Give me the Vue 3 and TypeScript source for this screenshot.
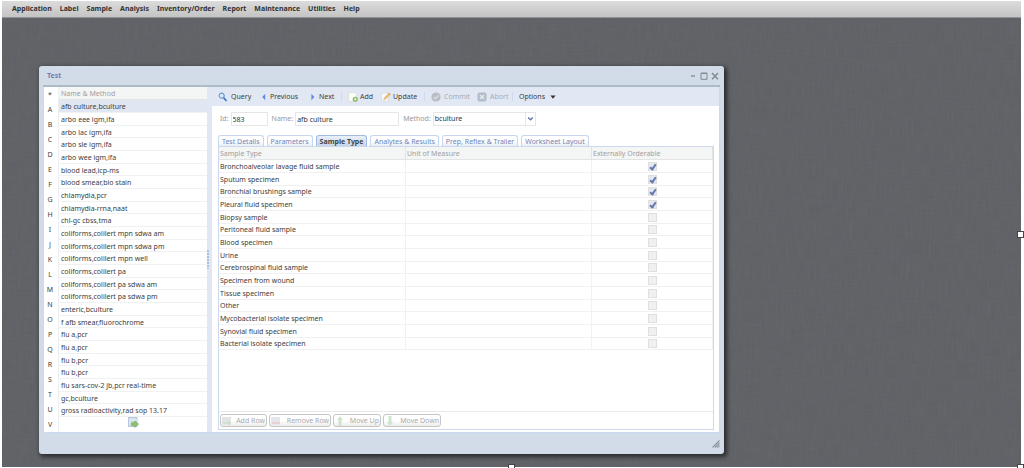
<script setup lang="ts">
import { ref } from 'vue'

interface SampleRow {
  name: string
  orderable: boolean
}

const menus = ['Application', 'Label', 'Sample', 'Analysis', 'Inventory/Order', 'Report', 'Maintenance', 'Utilities', 'Help']

const letters = ['*', ...'ABCDEFGHIJKLMNOPQRSTUV']

const tests = [
  'afb culture,bculture',
  'arbo eee igm,ifa',
  'arbo lac igm,ifa',
  'arbo sle igm,ifa',
  'arbo wee igm,ifa',
  'blood lead,icp-ms',
  'blood smear,bio stain',
  'chlamydia,pcr',
  'chlamydia-rrna,naat',
  'chl-gc cbss,tma',
  'coliforms,colilert mpn sdwa am',
  'coliforms,colilert mpn sdwa pm',
  'coliforms,colilert mpn well',
  'coliforms,colilert pa',
  'coliforms,colilert pa sdwa am',
  'coliforms,colilert pa sdwa pm',
  'enteric,bculture',
  'f afb smear,fluorochrome',
  'flu a,pcr',
  'flu a,pcr',
  'flu b,pcr',
  'flu b,pcr',
  'flu sars-cov-2 jb,pcr real-time',
  'gc,bculture',
  'gross radioactivity,rad sop 13.17',
]

const tabs = ['Test Details', 'Parameters', 'Sample Type', 'Analytes & Results', 'Prep, Reflex & Trailer', 'Worksheet Layout']

const samples = ref<SampleRow[]>([
  { name: 'Bronchoalveolar lavage fluid sample', orderable: true },
  { name: 'Sputum specimen', orderable: true },
  { name: 'Bronchial brushings sample', orderable: true },
  { name: 'Pleural fluid specimen', orderable: true },
  { name: 'Biopsy sample', orderable: false },
  { name: 'Peritoneal fluid sample', orderable: false },
  { name: 'Blood specimen', orderable: false },
  { name: 'Urine', orderable: false },
  { name: 'Cerebrospinal fluid sample', orderable: false },
  { name: 'Specimen from wound', orderable: false },
  { name: 'Tissue specimen', orderable: false },
  { name: 'Other', orderable: false },
  { name: 'Mycobacterial isolate specimen', orderable: false },
  { name: 'Synovial fluid specimen', orderable: false },
  { name: 'Bacterial isolate specimen', orderable: false },
])

const selectedTest = ref(0)
const activeTab = ref(2)
const testId = ref('583')
const testName = ref('afb culture')
const method = ref('bculture')
</script>

<template>
  <div class="screen">
    <div class="desktop">
      <svg class="weave" aria-hidden="true">
        <filter id="weave-h"><feTurbulence type="fractalNoise" baseFrequency="0.05 0.5" numOctaves="2" /><feColorMatrix type="saturate" values="0" /></filter>
        <filter id="weave-v"><feTurbulence type="fractalNoise" baseFrequency="0.5 0.05" numOctaves="2" /><feColorMatrix type="saturate" values="0" /></filter>
        <rect width="100%" height="100%" filter="url(#weave-h)" />
        <rect width="100%" height="100%" filter="url(#weave-v)" />
      </svg>

      <nav class="menubar">
        <button v-for="m in menus" :key="m" type="button">{{ m }}</button>
      </nav>

      <section class="window">
        <header class="titlebar">
          <h1>Test</h1>
          <div class="controls">
            <button type="button" aria-label="Minimize">
              <svg viewBox="0 0 8 8"><path d="M2 4h4" stroke-width="1.3" /></svg>
            </button>
            <button type="button" aria-label="Maximize">
              <svg viewBox="0 0 8 8"><path d="M1 1h6v6.3H1zM1 1.5h6" /></svg>
            </button>
            <button type="button" aria-label="Close">
              <svg viewBox="0 0 8 8"><path d="M1 1l6 6.3M7 1L1 7.3" stroke-width="1.5" /></svg>
            </button>
          </div>
        </header>

        <div class="body">
          <aside class="browser">
            <div class="letters">
              <button v-for="l in letters" :key="l" type="button">{{ l }}</button>
            </div>
            <div class="tests">
              <h2>Name &amp; Method</h2>
              <ul>
                <li v-for="(t, i) in tests" :key="i" :class="{ selected: i === selectedTest }" @click="selectedTest = i">{{ t }}</li>
              </ul>
              <button class="more" type="button" aria-label="Next page">
                <svg viewBox="0 0 11 11">
                  <rect x="0.5" y="0.5" width="8.5" height="9" fill="#d3e0ec" stroke="#b9c9db" />
                  <path d="M1 3h8M1 5.5h8" stroke="#e9f0f7" />
                  <path d="M3.5 5.5h3.2V3.8L10.6 7l-3.9 3.4V8.7H3.5z" fill="#8cc26c" stroke="#6aa650" stroke-width=".5" />
                </svg>
              </button>
            </div>
          </aside>

          <div class="splitter"><span></span></div>

          <main class="detail">
            <div class="toolbar">
              <button class="w-query" type="button">
                <svg class="icon" viewBox="0 0 10 10">
                  <path d="M5.6 5.6L8.5 9" stroke="#4779b9" stroke-width="1.7" />
                  <circle cx="3.7" cy="3.6" r="2.5" fill="#dcebf8" stroke="#6c9bd2" stroke-width="1.2" />
                </svg>Query
              </button>
              <button class="w-previous" type="button">
                <svg class="arrow" viewBox="0 0 6 10"><path d="M4.5 1v8L0.8 5z" fill="#5b8def" /></svg>Previous
              </button>
              <button class="w-next" type="button">
                <svg class="arrow" viewBox="0 0 6 10"><path d="M1 1v8L4.7 5z" fill="#5b8def" /></svg>Next
              </button>
              <i class="sep"></i>
              <button class="w-add tight" type="button">
                <svg class="icon" viewBox="0 0 10 10">
                  <path d="M.7.5h5.8l2 2v6.8H.7z" fill="#fbfcf8" stroke="#d4d8d2" stroke-width=".6" />
                  <circle cx="7.2" cy="7.2" r="2.5" fill="#79b254" />
                  <path d="M7.2 5.7v3M5.7 7.2h3" stroke="#fff" stroke-width=".9" />
                </svg>Add
              </button>
              <button class="w-update tight" type="button">
                <svg class="icon" viewBox="0 0 10 10">
                  <path d="M.6 1h6.8v8.4H.6z" fill="#f7f9fc" stroke="#ccd4df" stroke-width=".6" />
                  <path d="M2.6 8l.6-2L7.7 1.2l1.5 1.3L4.6 7.3z" fill="#f1c06a" stroke="#dba966" stroke-width=".4" />
                  <path d="M7 1.9L7.9 1l1.6 1.3-.9 1z" fill="#df9a64" />
                </svg>Update
              </button>
              <i class="sep"></i>
              <button class="w-commit" type="button" disabled>
                <svg class="icon" viewBox="0 0 10 10">
                  <circle cx="5" cy="5" r="4.6" fill="#b6bdc5" />
                  <path d="M2.7 5.1l1.7 1.8L7.5 3.4" fill="none" stroke="#dfe4ea" stroke-width="1.3" />
                </svg>Commit
              </button>
              <button class="w-abort" type="button" disabled>
                <svg class="icon" viewBox="0 0 10 10">
                  <rect x=".5" y=".5" width="9" height="9" rx="2" fill="#b1bdc9" />
                  <path d="M3 3l4 4M7 3L3 7" stroke="#e4e9ef" stroke-width="1.5" />
                </svg>Abort
              </button>
              <i class="sep"></i>
              <button class="w-options" type="button">
                Options
                <svg class="caret" viewBox="0 0 6 4"><path d="M.4.4h5.2L3 3.7z" fill="#333" /></svg>
              </button>
            </div>

            <form class="fields" @submit.prevent>
              <label for="test-id">Id:</label>
              <input id="test-id" v-model="testId" class="f-id" type="text" />
              <label for="test-name">Name:</label>
              <input id="test-name" v-model="testName" class="f-name" type="text" />
              <label for="test-method">Method:</label>
              <span class="select">
                <select id="test-method" v-model="method">
                  <option>bculture</option>
                </select>
                <svg viewBox="0 0 8 6"><path d="M1.3 1.3L4 3.8l2.7-2.5" fill="none" stroke="#6378ad" stroke-width="1.6" /></svg>
              </span>
            </form>

            <div class="tabs" role="tablist">
              <button
                v-for="(t, i) in tabs"
                :key="t"
                type="button"
                role="tab"
                :aria-selected="i === activeTab"
                :class="{ active: i === activeTab }"
                @click="activeTab = i"
              >{{ t }}</button>
            </div>

            <div class="panel">
              <table>
                <colgroup>
                  <col class="c-type" />
                  <col class="c-unit" />
                  <col />
                </colgroup>
                <thead>
                  <tr><th>Sample Type</th><th>Unit of Measure</th><th>Externally Orderable</th></tr>
                </thead>
                <tbody>
                  <tr v-for="s in samples" :key="s.name">
                    <td>{{ s.name }}</td>
                    <td></td>
                    <td class="check"><input v-model="s.orderable" type="checkbox" :aria-label="s.name + ' externally orderable'" /></td>
                  </tr>
                </tbody>
              </table>
              <div class="actions">
                <button class="b-add" type="button" disabled>
                  <svg viewBox="0 0 10 10"><rect width="9" height="8" y="1" fill="#e2e4e6" /><path d="M1 7h8M7 5v4" stroke="#c3dcc0" /></svg>Add Row
                </button>
                <button class="b-remove" type="button" disabled>
                  <svg viewBox="0 0 10 10"><rect width="9" height="8" y="1" fill="#e5e6e9" /><path d="M1 7h8" stroke="#edb9b9" /></svg>Remove Row
                </button>
                <button class="b-up" type="button" disabled>
                  <svg viewBox="0 0 10 10"><path d="M5 0l3 4H6.5v6h-3V4H2z" fill="#cfe3cd" /></svg>Move Up
                </button>
                <button class="b-down" type="button" disabled>
                  <svg viewBox="0 0 10 10"><path d="M5 10l3-4H6.5V0h-3v6H2z" fill="#cfe3cd" /></svg>Move Down
                </button>
              </div>
            </div>
          </main>
        </div>

        <footer class="statusbar">
          <svg viewBox="0 0 8 8"><path d="M.5 7.5l7-7M3 7.5L7.5 3M5.5 7.5l2-2" stroke="#8b93a0" stroke-width="1.1" /></svg>
        </footer>
      </section>
    </div>
    <span class="handle right"></span>
    <span class="handle bottom"></span>
    <span class="handle corner"></span>
  </div>
</template>

<style>
body {
  margin: 0;
  background: #fff;
}
</style>

<style scoped>
.screen {
  position: relative;
  box-sizing: border-box;
  min-height: 100vh;
  padding: 1px 3px 1px 2px;
  display: flex;
  overflow: hidden;
  font-family: "Noto Sans", "Open Sans", sans-serif;
  font-size: 7px;
  line-height: 10px;
  color: #3c3c3c;
}

.screen * {
  box-sizing: border-box;
}

button,
input,
select {
  font: inherit;
  color: inherit;
  margin: 0;
  padding: 0;
  border: 0;
  background: none;
}

svg {
  display: block;
  flex: none;
}

.desktop {
  position: relative;
  flex: 1;
  min-width: 0;
  background: #5c5e63;
}

.weave {
  position: absolute;
  inset: 0;
  width: 100%;
  height: 100%;
  opacity: 0.07;
}

.menubar {
  position: relative;
  display: flex;
  align-items: center;
  gap: 8px;
  height: 17px;
  padding-left: 10px;
  background: linear-gradient(#dcdcdc, #c4c4c4);
  border-bottom: 1px solid #929396;
}

.menubar button {
  font-weight: 700;
  color: #333;
}

.window {
  position: relative;
  margin: 48px 297px 13px 37px;
  padding: 0 4px;
  background: #d2dce8;
  border-radius: 3px;
  box-shadow: 2px 2px 4px 1px #2b2c2e;
}

.titlebar {
  display: flex;
  align-items: center;
  justify-content: space-between;
  height: 21px;
  padding: 0 1px 0 4px;
  border-bottom: 2px solid #adbac8;
}

.titlebar h1 {
  margin: 0;
  font-size: 7px;
  color: #7080ad;
}

.controls {
  display: flex;
  gap: 3px;
}

.controls svg {
  width: 8px;
  height: 8px;
  fill: none;
  stroke: #838990;
}

.body {
  display: flex;
  height: 346px;
  border: 1px solid #c9daef;
  border-top: 0;
  background: #fff;
}

.browser {
  display: flex;
  flex: 0 0 163px;
}

.letters {
  display: grid;
  grid-auto-rows: 1fr;
  width: 15px;
  border-right: 1px solid #eceef1;
}

.letters button {
  padding-right: 2px;
}

.tests {
  flex: 1;
  min-width: 0;
}

.tests h2 {
  height: 13px;
  margin: 0;
  padding-left: 2px;
  font-size: 7px;
  font-weight: 400;
  line-height: 13px;
  color: #a0a0a0;
  background: #f4f5f5;
  border-bottom: 1px solid #e1e3e5;
}

.tests ul {
  margin: 0;
  padding: 0;
  list-style: none;
}

.tests li {
  height: 13px;
  padding-left: 2px;
  line-height: 13px;
  white-space: nowrap;
  border-bottom: 1px solid #f0f1f2;
}

.tests li:nth-child(3n) {
  height: 12px;
}

.tests li.selected {
  background: #e1e7f2;
}

.more {
  display: block;
  margin: 0 auto;
}

.more svg {
  width: 11px;
  height: 11px;
}

.splitter {
  display: flex;
  align-items: center;
  flex: 0 0 5px;
  background: #e1e8f4;
}

.splitter span {
  width: 2px;
  height: 19px;
  background: repeating-linear-gradient(#a9c0e2 0 2px, transparent 2px 3px);
}

.detail {
  display: flex;
  flex-direction: column;
  flex: 1;
  min-width: 0;
}

.toolbar {
  display: flex;
  align-items: center;
  height: 19px;
  padding-left: 6px;
  background: #e1e8f4;
}

.toolbar button {
  display: flex;
  align-items: center;
  flex: none;
  gap: 3px;
  line-height: 11px;
  white-space: nowrap;
}

.toolbar button.tight {
  gap: 2px;
}

.toolbar button:disabled {
  color: #a4abb5;
}

.icon {
  width: 10px;
  height: 10px;
}

.arrow {
  width: 6px;
  height: 8px;
}

.caret {
  width: 6px;
  height: 4px;
  margin-left: 2px;
}

.sep {
  width: 1px;
  height: 9px;
  margin-right: 6px;
  background: #cddaf0;
}

.w-query { width: 43px; }
.w-previous { width: 49px; }
.w-next { width: 31px; }
.w-add { width: 33px; }
.w-update { width: 43px; }
.w-commit { width: 46px; }
.w-abort { width: 35px; }

.fields {
  display: flex;
  align-items: center;
  height: 14px;
  margin: 6px 0 9px 8px;
  color: #999;
}

.fields input,
.select {
  height: 14px;
  margin: 0 4px 0 2px;
  border: 1px solid #e6e6e6;
  color: #333;
  background: #fff;
}

.fields input {
  padding-left: 1px;
}

.fields .f-id { width: 37px; }
.fields .f-name { width: 104px; }

.select {
  position: relative;
  display: flex;
  width: 103px;
}

.select select {
  flex: 1;
  appearance: none;
  padding-left: 1px;
}

.select svg {
  width: 10px;
  height: 100%;
  padding: 2px 1px;
  border-left: 1px solid #e6e6e6;
  pointer-events: none;
}

.tabs {
  display: flex;
  gap: 3px;
  margin-left: 6px;
}

.tabs button {
  height: 11px;
  padding: 0 3px;
  line-height: 12px;
  white-space: nowrap;
  color: #7183b5;
  background: linear-gradient(#fff 50%, #e9eef6);
  border: 1px solid #c9d7ee;
  border-bottom: 0;
  border-radius: 3px 3px 0 0;
}

.tabs button.active {
  font-weight: 700;
  color: #444;
  background: linear-gradient(#e9f0f9, #c7d5e9);
  border-color: #a3b9e0;
}

.panel {
  display: flex;
  flex-direction: column;
  justify-content: space-between;
  flex: 1;
  margin: 0 5px 2px 6px;
  border: 1px solid #cbd8ee;
}

table {
  width: 100%;
  table-layout: fixed;
  border-collapse: separate;
  border-spacing: 0;
}

.c-type { width: 187px; }
.c-unit { width: 186px; }

th,
td {
  height: 13px;
  padding: 0 0 0 1px;
  line-height: 11px;
  text-align: left;
  white-space: nowrap;
  border-bottom: 1px solid #f1f1f2;
  border-right: 1px solid #f1f1f2;
}

th {
  font-weight: 400;
  color: #a0a0a0;
  background: #f4f5f5;
  border-color: #e1e3e5;
}

tbody tr:nth-child(3n) td {
  height: 12px;
}

.check {
  text-align: center;
}

.check input {
  display: block;
  width: 9px;
  height: 9px;
  margin: 0 auto;
  appearance: none;
  background: #f0f0f0;
  border: 1px solid #dfdfdf;
}

.check input:checked {
  background: #e4e7ee;
}

.check input:checked::after {
  content: "";
  display: block;
  box-sizing: border-box;
  width: 4px;
  height: 7px;
  margin: 0 auto;
  border: solid #6378b0;
  border-width: 0 2px 2px 0;
  transform: rotate(35deg);
}

.actions {
  display: flex;
  align-items: center;
  gap: 2px;
  height: 18px;
  padding-left: 1px;
  border-top: 1px solid #e9e9e9;
}

.actions button {
  display: flex;
  align-items: center;
  justify-content: space-between;
  height: 13px;
  padding: 0 1px;
  white-space: nowrap;
  color: #aaa;
  background: linear-gradient(#fff 50%, #ececec);
  border: 1px solid #c5c5c5;
  border-radius: 3px;
}

.actions svg {
  width: 10px;
  height: 10px;
}

.b-add { width: 47px; }
.b-remove { width: 62px; }
.b-up { width: 48px; }
.b-down { width: 58px; }

.statusbar {
  display: flex;
  align-items: center;
  justify-content: flex-end;
  height: 21px;
}

.statusbar svg {
  width: 8px;
  height: 8px;
}

.handle {
  position: absolute;
  width: 7px;
  height: 7px;
  background: #fff;
  border: 1px solid #444;
}

.handle.right {
  top: 50%;
  right: 0;
  margin-top: -3px;
}

.handle.bottom {
  left: 50%;
  bottom: -3px;
  margin-left: -4px;
}

.handle.corner {
  right: 0;
  bottom: -3px;
}
</style>
